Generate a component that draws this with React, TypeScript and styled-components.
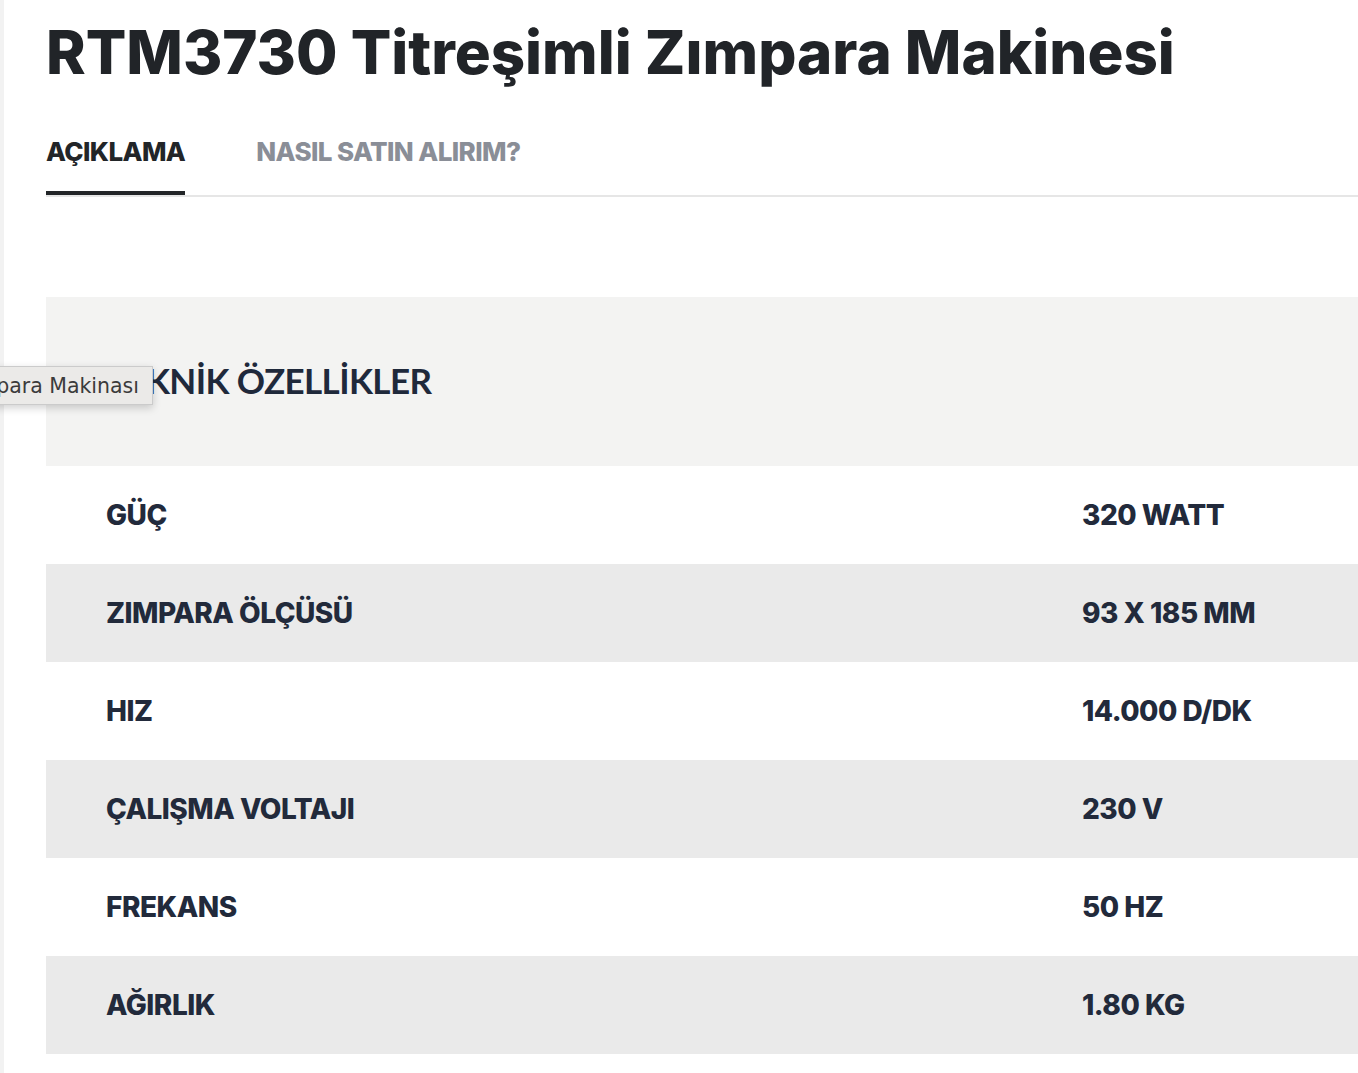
import React from "react";
import styled, { createGlobalStyle } from "styled-components";

const GlobalStyle = createGlobalStyle`
  html, body {
    margin: 0;
    padding: 0;
    background: #ffffff;
    overflow-x: hidden;
  }
  * { box-sizing: border-box; }
`;

const Page = styled.div`
  position: relative;
  display: flex;
  min-height: 1073px;
  width: 1358px;
  overflow: hidden;
`;

const LeftStrip = styled.div`
  width: 4px;
  flex: none;
  background: #f2f2f2;
`;

const Main = styled.main`
  flex: 1;
  padding-left: 42px;
  padding-top: 16px;
  display: flex;
  flex-direction: column;
`;

const Title = styled.h1`
  margin: 0;
  font-family: Inter, "Noto Sans", sans-serif;
  font-weight: 800;
  font-size: 60px;
  line-height: 72px;
  letter-spacing: 0px;
  color: #212428;
`;

const TabList = styled.div`
  display: flex;
  gap: 71px;
  margin-top: 48px;
  border-bottom: 2px solid #e6e6e6;
`;

const Tab = styled.div<{ $active?: boolean }>`
  font-family: Inter, "Noto Sans", sans-serif;
  font-weight: 800;
  font-size: 26px;
  line-height: 32px;
  letter-spacing: -0.6px;
  padding-bottom: 23px;
  border-bottom: 4px solid ${(p) => (p.$active ? "#222528" : "transparent")};
  color: ${(p) => (p.$active ? "#222528" : "#8a8e97")};
`;

const SpecSection = styled.section`
  margin-top: 100px;
  display: flex;
  flex-direction: column;
`;

const SpecHeader = styled.div`
  height: 169px;
  background: #f3f3f2;
  display: flex;
  align-items: center;
  padding-left: 60px;
  padding-bottom: 3px;
`;

const SpecTitle = styled.h2`
  margin: 0;
  font-family: Lato, "Noto Sans", sans-serif;
  font-weight: 700;
  font-size: 35px;
  line-height: 44px;
  letter-spacing: -0.6px;
  color: #1f293b;
`;

const Row = styled.div<{ $shaded?: boolean }>`
  display: grid;
  grid-template-columns: 976px 1fr;
  align-items: center;
  height: 98px;
  padding-left: 60px;
  background: ${(p) => (p.$shaded ? "#eaeaea" : "#ffffff")};
`;

const Cell = styled.div`
  font-family: Inter, "Noto Sans", sans-serif;
  font-weight: 800;
  font-size: 28px;
  line-height: 34px;
  letter-spacing: -0.5px;
  color: #222a3b;
`;

const Tooltip = styled.div`
  position: absolute;
  top: 366px;
  left: 153px;
  transform: translateX(-100%);
  height: 39px;
  display: flex;
  align-items: center;
  padding: 0 13px 0 12px;
  white-space: nowrap;
  background: #ebeae8;
  border: 1px solid #cbcbcb;
  box-shadow: 0 3px 8px rgba(0, 0, 0, 0.18);
  font-family: "DejaVu Sans", "Noto Sans", sans-serif;
  font-size: 20.5px;
  color: #3b3b3b;
`;

const specs: [string, string][] = [
  ["GÜÇ", "320 WATT"],
  ["ZIMPARA ÖLÇÜSÜ", "93 X 185 MM"],
  ["HIZ", "14.000 D/DK"],
  ["ÇALIŞMA VOLTAJI", "230 V"],
  ["FREKANS", "50 HZ"],
  ["AĞIRLIK", "1.80 KG"],
];

export default function App() {
  return (
    <>
      <GlobalStyle />
      <Page>
        <LeftStrip />
        <Main>
          <Title>RTM3730 Titreşimli Zımpara Makinesi</Title>
          <TabList>
            <Tab $active>AÇIKLAMA</Tab>
            <Tab>NASIL SATIN ALIRIM?</Tab>
          </TabList>
          <SpecSection>
            <SpecHeader>
              <SpecTitle>TEKNİK ÖZELLİKLER</SpecTitle>
            </SpecHeader>
            {specs.map(([k, v], i) => (
              <Row key={k} $shaded={i % 2 === 1}>
                <Cell>{k}</Cell>
                <Cell>{v}</Cell>
              </Row>
            ))}
          </SpecSection>
        </Main>
        <Tooltip>Titreşimli Zımpara Makinası</Tooltip>
      </Page>
    </>
  );
}
